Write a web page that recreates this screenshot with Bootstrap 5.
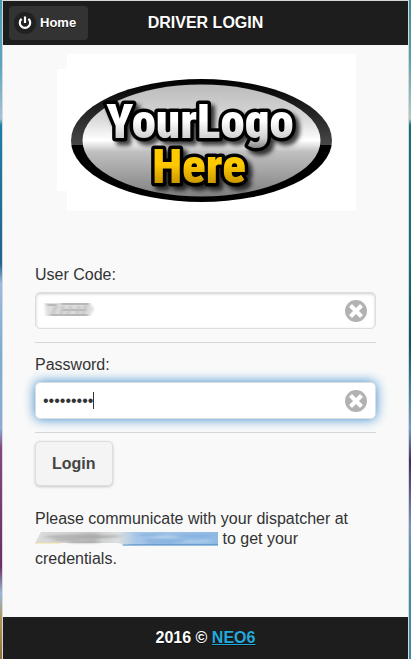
<!DOCTYPE html>
<html lang="en">
<head>
<meta charset="utf-8">
<meta name="viewport" content="width=device-width, initial-scale=1">
<title>Driver Login</title>
<link href="https://cdn.jsdelivr.net/npm/bootstrap@5.3.0/dist/css/bootstrap.min.css" rel="stylesheet">
<style>
  body {
    font: 16px/20px "Liberation Sans", Arial, sans-serif;
    color: #333;
    padding: 0 2px;
    background:
      linear-gradient(#3f8e9c 0, #5aa3a8 9%, #b5c9c9 18%, #146f7d 19%, #17717f 38%, #0d5563 52%, #6f9fd0 65%, #47286b 70%, #7a93c8 80%, #3e8fa8 88%, #4586a8) right / 50% 100% no-repeat,
      linear-gradient(#4b9ab5 0, #5ba5c0 10%, #a5c3d6 18%, #1c7fa4 19%, #22638f 40%, #9db9e0 43%, #78aed4 54%, #8cabd8 65%, #85487c 68%, #6d2f63 86%, #9ab8dc 90%, #b0935a 94%, #8d733c) left / 50% 100% no-repeat;
  }
  .screen { background: #f9f9f9; border: 1px solid #d5d9d9; border-width: 1px 1px 0; }
  .bar { background: #1d1d1d; color: #fff; font-weight: 700; text-shadow: 0 1px 0 #111; }
  .topbar { height: 44px; display: grid; grid-template-columns: 1fr auto 1fr; padding: 0 6px; }
  .topbar h1 { font-size: 16px; line-height: 20px; font-weight: 700; }
  .home-btn, .home-btn:hover { background: #333; color: #fff; font-size: 13px; line-height: 20px; font-weight: 700; border: 0; border-radius: 4px; height: 34px; padding: 0 12px 0 5px; }
  .footbar { height: 42px; }
  .footbar a { color: #22aadd; }
  .brand { width: 300px; padding: 9px 0 0; }
  .brand svg { width: 100%; }
  .brand text { font-family: "Roboto Condensed", Roboto, "Liberation Sans", sans-serif; font-weight: 900; stroke: #000; stroke-width: 7px; stroke-linejoin: round; paint-order: stroke; }
  .login { padding: 54px 32px 0; }
  .login label { margin-bottom: 7px; }
  .field { height: 37px; background: #fff; border: 1px solid #ddd; border-radius: 5px; box-shadow: inset 0 1px 3px rgba(0,0,0,.2); padding: 0 8px 0 7px; }
  .field:focus-within { box-shadow: 0 0 12px #3388cc; }
  .field input, .field input:focus { background: none; border: 0; box-shadow: none; padding: 0; color: #333; font-size: 16px; line-height: 20px; }
  .field input { min-width: 0; }
  .field #password:focus { background: linear-gradient(#333, #333) 50px 50% / 1px 17px no-repeat; caret-color: transparent; }
  .clear-btn { border: 0; padding: 0; background: none; line-height: 0; }
  .divider { border-top: 1px solid #d6d6d6; margin-top: 13px; }
  .next { padding-top: 12px; }
  .hidden-code { width: 52px; height: 16px; }
  .hidden-contact { width: 183px; height: 15px; vertical-align: -2px; }
  .login-btn, .login-btn:hover { background: #f4f4f4; color: #444; border: 1px solid #ddd; border-radius: 5px; font-size: 16px; line-height: 20px; font-weight: 700; padding: 11px 16px; margin-top: 8px; height: 45px; box-shadow: 0 1px 3px rgba(0,0,0,.2); text-shadow: 0 1px 0 #f3f3f3; }
  .note { margin: 23px 0; }
</style>
</head>
<body>
<div class="screen min-vh-100 d-flex flex-column">
  <header class="bar topbar align-items-center">
    <a href="#" class="btn home-btn d-flex align-items-center gap-1 me-auto">
      <svg width="22" height="22" viewBox="0 0 22 22" aria-hidden="true"><circle cx="11" cy="11" r="11" fill="#212121"/><path d="M7.6 6.8A5.2 5.2 0 1 0 14.4 6.8" fill="none" stroke="#fff" stroke-width="2.2"/><path d="M11 4.5v6.5" stroke="#fff" stroke-width="2.2"/></svg>
      Home
    </a>
    <h1 class="m-0">DRIVER LOGIN</h1>
    <span></span>
  </header>

  <main>
    <div class="brand mx-auto">
      <svg class="d-block" viewBox="56 54 300 157" role="img" aria-label="Your Logo Here">
        <defs>
          <linearGradient id="rim" x2="0" y2="1"><stop stop-color="#000"/><stop offset=".54" stop-color="#484848"/><stop offset=".54" stop-color="#000"/></linearGradient>
          <linearGradient id="plate" x2="0" y2="1"><stop stop-color="#bbb"/><stop offset=".3" stop-color="#d8d8d8"/><stop offset=".5" stop-color="#fff"/><stop offset=".6" stop-color="#c0c0c0"/><stop offset="1" stop-color="#808080"/></linearGradient>
          <linearGradient id="silver" gradientUnits="userSpaceOnUse" x1="0" y1="98" x2="0" y2="148"><stop offset=".45" stop-color="#fff"/><stop offset=".8" stop-color="#d0d0d0"/><stop offset="1" stop-color="#888"/></linearGradient>
          <linearGradient id="gold" gradientUnits="userSpaceOnUse" x1="0" y1="145" x2="0" y2="184"><stop offset=".5" stop-color="#ffc900"/><stop offset="1" stop-color="#c79500"/></linearGradient>
          <filter id="shade" x="-10%" y="-20%" width="125%" height="150%"><feDropShadow dx="4" dy="4" stdDeviation="2" flood-opacity=".75"/></filter>
        </defs>
        <path d="M67 54h289v157H67v-20H57V69h10z" fill="#fff"/>
        <ellipse cx="201.500" cy="140.500" rx="130.500" ry="61.500" fill="url(#rim)"/>
        <ellipse cx="201.500" cy="140.500" rx="119" ry="56" fill="url(#plate)"/>
        <g filter="url(#shade)" text-anchor="middle">
          <text x="200" y="138" font-size="49" fill="url(#silver)">YourLogo</text>
          <text x="199" y="183" font-size="49" fill="url(#gold)">Here</text>
        </g>
      </svg>
    </div>

    <form class="login">
      <label for="code" class="d-block">User Code:</label>
      <div class="field d-flex align-items-center">
        <svg class="hidden-code flex-shrink-0" viewBox="0 1 52 16" aria-hidden="true">
          <defs><filter id="soft" x="-10%" y="-20%" width="120%" height="140%"><feGaussianBlur stdDeviation="1.500 .6"/></filter></defs>
          <g filter="url(#soft)"><path d="M2 1h45l4 6-4 7H3z" fill="#dedede"/><path d="M4 3h10M18 2h28M20 8h24M7 13h38" stroke="#aaa" stroke-width="1.500"/><path d="M13 4l-3 8M20 4l-2 9M28 4l-3 8M36 4l-2 8M43 3l-3 9" stroke="#c2c2c2" stroke-width="3"/></g>
        </svg>
        <input id="code" type="text" class="form-control flex-grow-1" autocomplete="off">
        <button type="button" class="clear-btn" aria-label="Clear user code">
          <svg width="22" height="22" viewBox="0 0 22 22"><circle cx="11" cy="11" r="11" fill="#b2b2b2"/><path d="M5.500 5.500l11 11M16.500 5.500l-11 11" stroke="#fff" stroke-width="4.200"/></svg>
        </button>
      </div>
      <div class="divider"></div>

      <label for="password" class="d-block next">Password:</label>
      <div class="field d-flex align-items-center">
        <input id="password" type="password" class="form-control flex-grow-1" value="neosixpwd" autofocus>
        <button type="button" class="clear-btn" aria-label="Clear password">
          <svg width="22" height="22" viewBox="0 0 22 22"><circle cx="11" cy="11" r="11" fill="#b2b2b2"/><path d="M5.500 5.500l11 11M16.500 5.500l-11 11" stroke="#fff" stroke-width="4.200"/></svg>
        </button>
      </div>
      <div class="divider"></div>

      <button type="submit" class="btn login-btn d-block">Login</button>
      <p class="note">Please communicate with your dispatcher at
        <svg class="hidden-contact" viewBox="0 0 184 15" preserveAspectRatio="none" aria-hidden="true">
          <defs><linearGradient id="veil"><stop stop-color="#ddd"/><stop offset=".3" stop-color="#c8c8c8"/><stop offset=".45" stop-color="#dcdee0"/><stop offset=".55" stop-color="#a9c8e8"/><stop offset="1" stop-color="#8fb9e4"/></linearGradient>
          <filter id="smear" x="-5%" y="-20%" width="110%" height="140%"><feGaussianBlur stdDeviation="4 .8"/></filter></defs>
          <path d="M6 1h178v13H96l-14-2H0z" fill="url(#veil)"/>
          <g filter="url(#smear)" fill="none" stroke-width="1.500"><path d="M12 6l50-2M20 9l64-4M34 11h30M66 3l-10 8" stroke="#999"/><path d="M104 4h24M110 9h60M136 5h40M112 12h30" stroke="#78a9db"/><path d="M120 6h24M150 10h26" stroke="#c5dcf2"/></g>
          <path d="M0 12h26" stroke="#f0dda0"/><path d="M88 14h96" stroke="#3c82c4"/>
        </svg>
        to get your credentials.</p>
    </form>
  </main>

  <footer class="bar footbar mt-auto d-flex align-items-center justify-content-center">
    <span>2016 © <a href="#">NEO6</a></span>
  </footer>
</div>
<script src="https://cdn.jsdelivr.net/npm/bootstrap@5.3.0/dist/js/bootstrap.bundle.min.js"></script>
</body>
</html>
